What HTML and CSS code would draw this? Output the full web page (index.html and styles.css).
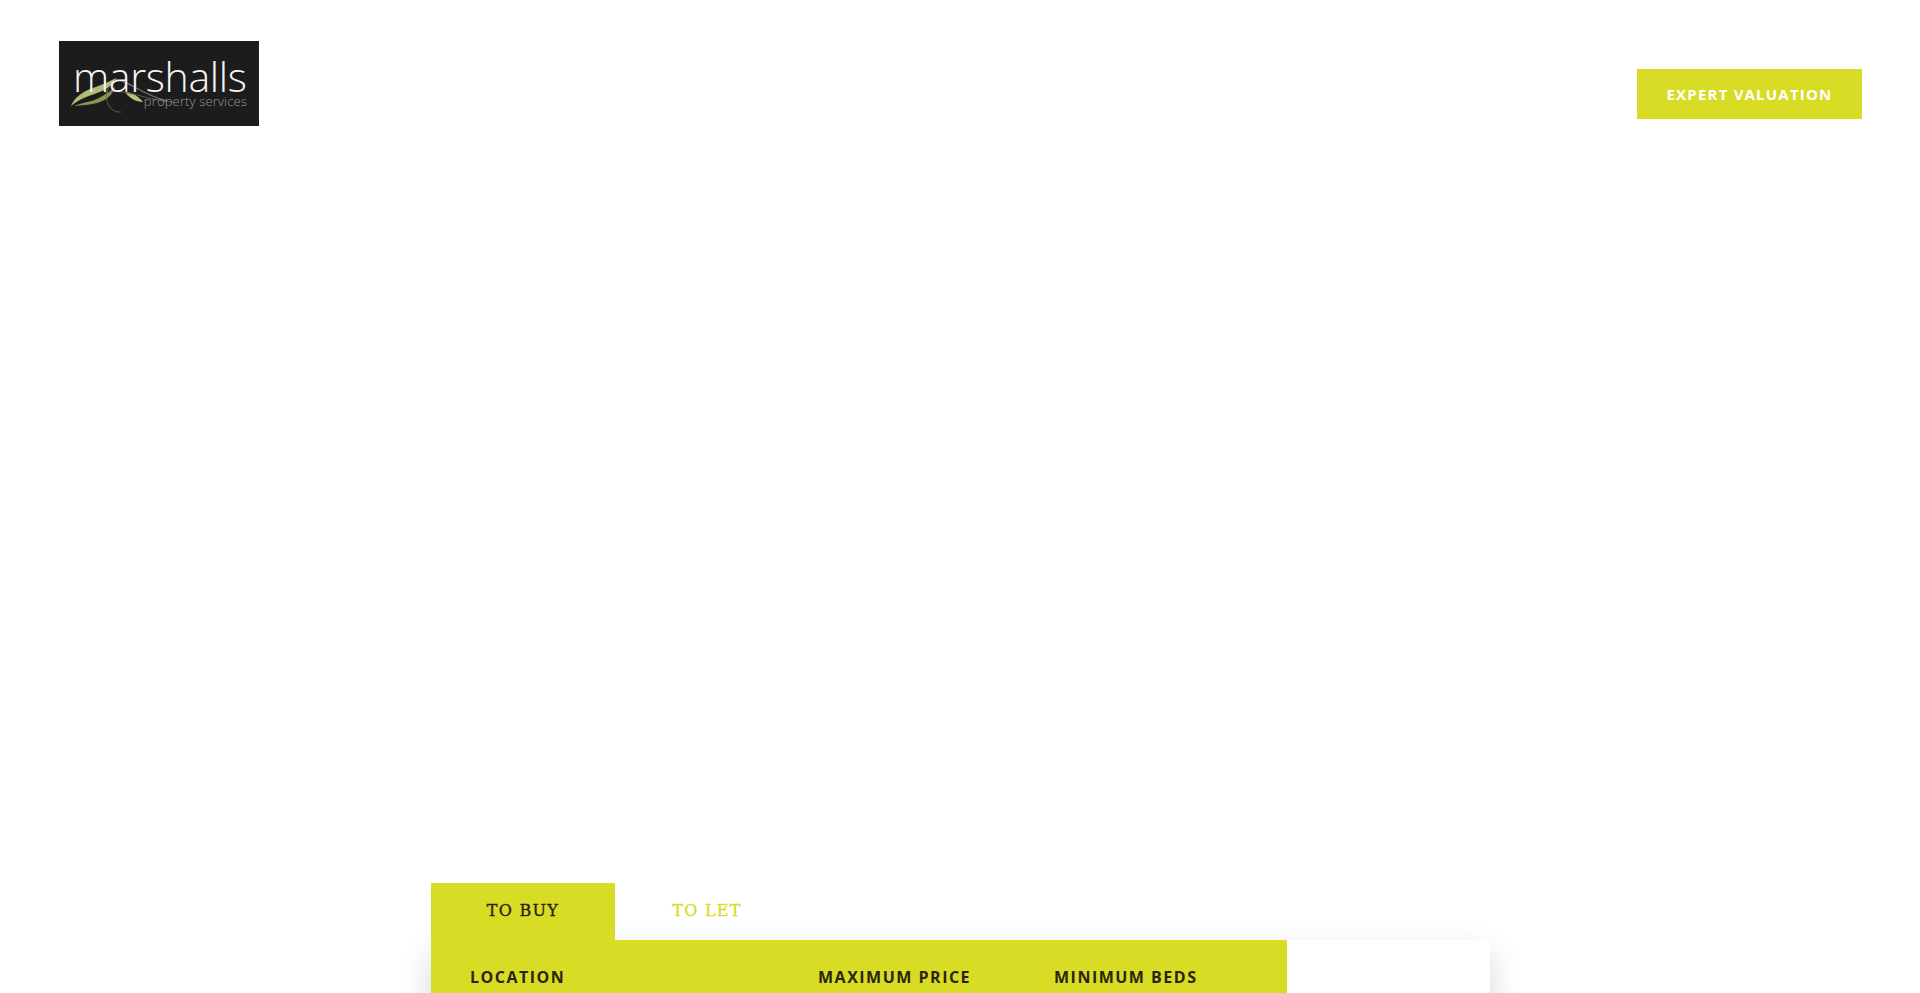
FILE: index.html
```html
<!DOCTYPE html>
<html lang="en">
  <head>
    <meta charset="UTF-8" />
    <title>Marshalls Property Services</title>
    <link rel="stylesheet" href="styles.css">
  </head>
  <body>
    <header class="site-header">
      <a class="logo" href="#">
        <svg class="logo-leaf" viewBox="0 0 200 85" aria-hidden="true">
          <path d="M12 65 C15 57 24 50 34 47 C42 44 50 41 57 37 C54 44 47 49 38 52 C30 55 20 58 12 65 Z" fill="#b4bb72" />
          <path d="M15 65 C24 61 33 61 40 57 C46 54 51 50 56 46 C54 54 46 60 38 62 C30 64 22 64 15 65 Z" fill="#8d9650" />
          <path d="M66 51 C73 51 79 55 84 61 C77 61 70 57 66 51 Z" fill="#b9bf78" />
          <path d="M56 38 C70 40 84 54 108 60" fill="none" stroke="#74755f" stroke-width="1.3" />
          <path d="M46 52 C66 46 88 60 114 61" fill="none" stroke="#5a5b50" stroke-width="1" />
          <path d="M50 46 C44 58 50 72 62 71" fill="none" stroke="#6d6e5e" stroke-width="0.8" />
        </svg>
        <span class="logo-name">marshalls</span>
        <span class="logo-sub">property services</span>
      </a>
      <a class="valuation-btn" href="#">Expert Valuation</a>
    </header>

    <section class="search">
      <div class="search-tabs">
        <a class="tab active" href="#">To Buy</a>
        <a class="tab" href="#">To Let</a>
      </div>
      <form class="search-panel">
        <div class="search-fields">
          <label class="field field-location">Location</label>
          <label class="field field-price">Maximum Price</label>
          <label class="field field-beds">Minimum Beds</label>
        </div>
        <div class="search-side"></div>
      </form>
    </section>
  </body>
</html>
```

FILE: styles.css
```css
html,
body {
  height: 100%;
  overflow: hidden;
}

body {
  margin: 0;
  display: flex;
  flex-direction: column;
  background: #ffffff;
  font-family: "Open Sans", sans-serif;
  color: #2a2410;
}

a {
  text-decoration: none;
}

.site-header {
  display: flex;
  justify-content: space-between;
  align-items: flex-start;
  padding: 41px 58px 0 59px;
}

.logo {
  position: relative;
  display: block;
  width: 200px;
  height: 85px;
  background: #1c1c1c;
}

.logo-leaf {
  position: absolute;
  left: 0;
  top: 0;
  width: 200px;
  height: 85px;
}

.logo-name {
  position: absolute;
  left: 14px;
  top: 17px;
  font-size: 41px;
  font-weight: 350;
  line-height: 36px;
  letter-spacing: -0.35px;
  color: #f4f4f4;
}

.logo-sub {
  position: absolute;
  right: 12px;
  top: 54px;
  font-size: 13px;
  font-weight: 300;
  line-height: 12px;
  letter-spacing: 0.15px;
  color: #9a9a92;
}

.valuation-btn {
  display: block;
  width: 225px;
  height: 50px;
  margin-top: 28px;
  background: #d8dc25;
  color: #ffffff;
  font-size: 15px;
  font-weight: 700;
  line-height: 50px;
  letter-spacing: 1.2px;
  text-align: center;
  text-transform: uppercase;
}

.search {
  margin: auto 0 0 431px;
  width: 1059px;
  height: 110px;
}

.search-tabs {
  display: flex;
  height: 57px;
}

.tab {
  width: 184px;
  font-family: "DejaVu Serif", serif;
  font-size: 16px;
  line-height: 55px;
  letter-spacing: 1.3px;
  text-align: center;
  text-transform: uppercase;
  color: #d8dc25;
  -webkit-text-stroke: 0.35px currentColor;
}

.tab.active {
  background: #d8dc25;
  color: #2a2410;
}

.search-panel {
  display: flex;
  height: 120px;
  background: #ffffff;
  box-shadow: 0 14px 30px rgba(0, 0, 0, 0.16);
}

.search-fields {
  display: flex;
  width: 856px;
  padding: 27px 0 0 39px;
  box-sizing: border-box;
  background: #d8dc25;
}

.field {
  font-size: 16px;
  font-weight: 700;
  line-height: 20px;
  letter-spacing: 1.5px;
  text-transform: uppercase;
}

.field-location {
  width: 348px;
}

.field-price {
  width: 236px;
}

.search-side {
  flex: 1;
}
```
